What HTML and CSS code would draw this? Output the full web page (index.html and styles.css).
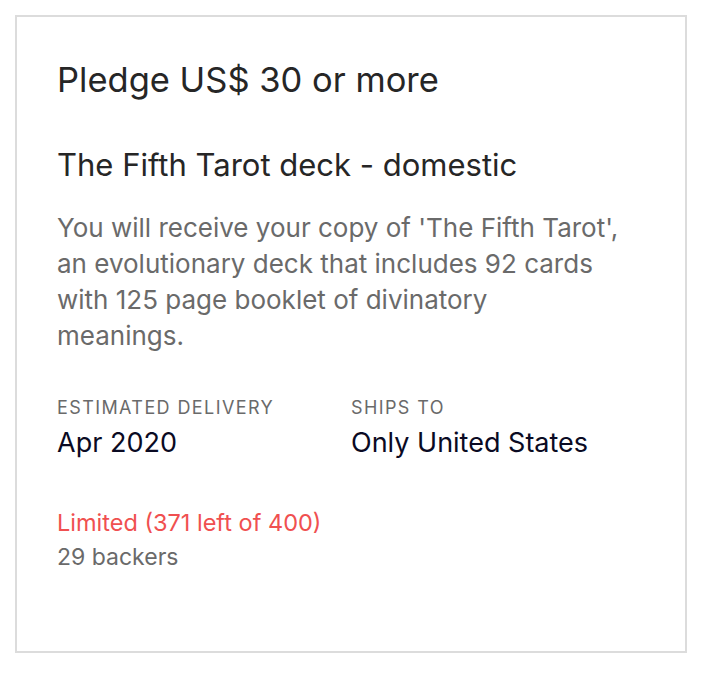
FILE: index.html
```html
<!DOCTYPE html>
<html lang="en">
<head>
    <meta charset="UTF-8">
    <meta name="viewport" content="width=device-width, initial-scale=1.0">
    <title>Reward - The Fifth Tarot</title>
    <link rel="stylesheet" href="styles.css">
</head>
<body>
    <div class="reward">
        <h2 class="pledge">Pledge US$ 30 or more</h2>
        <h3 class="title">The Fifth Tarot deck - domestic</h3>
        <p class="desc">You will receive your copy of 'The Fifth Tarot', an evolutionary deck that includes 92 cards with 125 page booklet of divinatory meanings.</p>

        <div class="info">
            <div class="info-col delivery">
                <span class="label">Estimated delivery</span>
                <span class="value">Apr 2020</span>
            </div>
            <div class="info-col">
                <span class="label">Ships to</span>
                <span class="value">Only United States</span>
            </div>
        </div>

        <div class="limited">Limited (371 left of 400)</div>
        <div class="backers">29 backers</div>
    </div>
</body>
</html>
```

FILE: styles.css
```css
* {
    margin: 0;
    padding: 0;
    box-sizing: border-box;
    font-family: 'Inter', 'Roboto', sans-serif;
}
body {
    background: #fff;
    padding: 15px;
    width: 706px;
}
.reward {
    width: 672px;
    height: 638px;
    border: 2px solid #dcdcdc;
    padding: 43px 40px 0 40px;
}
.pledge {
    font-size: 34.5px;
    font-weight: 400;
    line-height: 40px;
    color: #262626;
}
.title {
    font-size: 31px;
    font-weight: 400;
    line-height: 40px;
    color: #262626;
    margin-top: 45px;
}
.desc {
    font-size: 26px;
    line-height: 36px;
    color: #6a6a6a;
    margin-top: 25px;
    width: 564px;
}
.info {
    display: flex;
    margin-top: 42px;
}
.info-col {
    display: flex;
    flex-direction: column;
}
.delivery {
    width: 294px;
}
.label {
    font-size: 18px;
    line-height: 24px;
    letter-spacing: 1.4px;
    text-transform: uppercase;
    color: #6a6a6a;
}
.value {
    font-size: 27px;
    line-height: 34px;
    color: #0a0a23;
    margin-top: 6px;
}
.limited {
    font-size: 23.5px;
    line-height: 34px;
    color: #f05050;
    margin-top: 46px;
}
.backers {
    font-size: 23px;
    line-height: 34px;
    color: #6a6a6a;
}
```
